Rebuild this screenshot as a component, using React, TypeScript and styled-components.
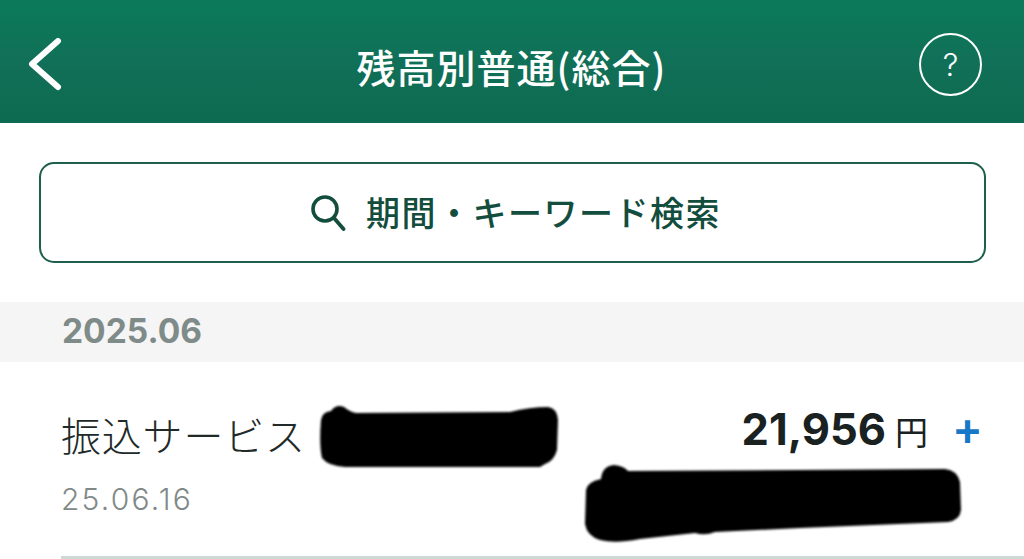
import React from "react";
import styled, { createGlobalStyle } from "styled-components";

const Global = createGlobalStyle`
  html, body { margin: 0; padding: 0; background: #fff; }
  body { font-family: Inter, "Noto Sans CJK JP", sans-serif; }
  * { box-sizing: border-box; }
`;

const Page = styled.div`
  position: relative;
  width: 1024px;
  height: 559px;
  overflow: hidden;
  background: #fff;
`;

const Header = styled.header`
  height: 123px;
  padding: 8px 41px 0 28px;
  background: linear-gradient(180deg, #0b7a5a 0%, #116f57 55%, #0c6b50 100%);
  display: grid;
  grid-template-columns: 64px 1fr 64px;
  align-items: center;
  color: #fff;
`;

const Title = styled.h1`
  margin: 0;
  padding-left: 12px;
  text-align: center;
  font-family: "Noto Sans CJK JP", sans-serif;
  font-size: 39px;
  line-height: 44px;
  font-weight: 500;
  letter-spacing: 1px;
  white-space: nowrap;
`;

const BackIcon = styled.svg`
  display: block;
  width: 36px;
  height: 56px;
`;

const HelpButton = styled.div`
  width: 63px;
  height: 63px;
  border: 2.5px solid #fff;
  border-radius: 50%;
  margin-bottom: 2px;
  display: flex;
  align-items: center;
  justify-content: center;
  font-size: 31px;
  font-weight: 300;
  line-height: 1;
`;

const SearchArea = styled.div`
  padding: 39px 38px 39px 39px;
`;

const SearchButton = styled.div`
  height: 101px;
  padding-left: 6px;
  border: 2px solid #1d5f4c;
  border-radius: 15px;
  display: flex;
  align-items: center;
  justify-content: center;
  gap: 20px;
  color: #134d3d;
`;

const SearchIcon = styled.svg`
  width: 36px;
  height: 38px;
  display: block;
`;

const SearchLabel = styled.span`
  font-family: "Noto Sans CJK JP", sans-serif;
  font-size: 34px;
  line-height: 44px;
  font-weight: 500;
  letter-spacing: 1.5px;
  margin-top: -2px;
`;

const MonthBand = styled.div`
  height: 60px;
  padding: 0 0 2px 62px;
  background: #f5f5f5;
  display: flex;
  align-items: center;
  font-size: 33.5px;
  font-weight: 700;
  color: #7e8b89;
`;

const Row = styled.div`
  height: 197px;
  margin-left: 61px;
  padding-top: 44px;
  border-bottom: 3px solid #ccd9d5;
  display: flex;
  justify-content: space-between;
  align-items: flex-start;
`;

const Left = styled.div`
  display: flex;
  flex-direction: column;
  gap: 19px;
`;

const Name = styled.div`
  font-family: "Noto Sans CJK JP", sans-serif;
  font-size: 40px;
  line-height: 56px;
  font-weight: 300;
  letter-spacing: 0.8px;
  color: #222a29;
`;

const DateText = styled.div`
  font-size: 30px;
  line-height: 36px;
  font-weight: 300;
  letter-spacing: 2.2px;
  color: #7f8a88;
`;

const AmountLine = styled.div`
  display: flex;
  align-items: baseline;
  padding-right: 41px;
  margin-top: -5px;
  color: #1a2221;
`;

const Amount = styled.span`
  font-size: 43.5px;
  line-height: 56px;
  font-weight: 700;
`;

const Yen = styled.span`
  margin-left: 9px;
  font-family: "Noto Sans CJK JP", sans-serif;
  font-size: 33px;
  font-weight: 400;
`;

const Plus = styled.span`
  margin-left: 24px;
  font-size: 46px;
  line-height: 44px;
  font-weight: 600;
  color: #1878c8;
`;

const Redaction = styled.svg`
  position: absolute;
  left: 0;
  top: 0;
  width: 1024px;
  height: 559px;
  pointer-events: none;
  filter: blur(1px);
`;

export default function App() {
  return (
    <Page>
      <Global />
      <Header>
        <BackIcon viewBox="0 0 36 56">
          <path d="M30 3 L4 26 L30 49" fill="none" stroke="#fff" strokeWidth="6" strokeLinecap="round" strokeLinejoin="round" />
        </BackIcon>
        <Title>残高別普通(総合)</Title>
        <HelpButton>?</HelpButton>
      </Header>
      <SearchArea>
        <SearchButton>
          <SearchIcon viewBox="0 0 36 38">
            <circle cx="15" cy="15" r="12" fill="none" stroke="currentColor" strokeWidth="3.6" />
            <path d="M24 24 L33.5 35" fill="none" stroke="currentColor" strokeWidth="3.8" strokeLinecap="round" />
          </SearchIcon>
          <SearchLabel>期間・キーワード検索</SearchLabel>
        </SearchButton>
      </SearchArea>
      <MonthBand>2025.06</MonthBand>
      <Row>
        <Left>
          <Name>振込サービス</Name>
          <DateText>25.06.16</DateText>
        </Left>
        <AmountLine>
          <Amount>21,956</Amount>
          <Yen>円</Yen>
          <Plus>+</Plus>
        </AmountLine>
      </Row>
      <Redaction viewBox="0 0 1024 559">
        <path
          d="M321 420 Q322 412 331 411 Q336 404 344 407 Q350 412 356 413 L510 412 Q530 407 548 407 Q557 408 558 420 L557 450 Q554 461 545 464 L540 467 L345 467 Q328 466 322 458 Q319 445 321 420 Z"
          fill="#000"
        />
        <path
          d="M586 490 Q587 482 601 479 Q602 466 614 465 Q624 466 628 471 L800 470 L945 469 Q957 470 960 482 L961 510 Q960 520 948 522 L800 528 L715 532 Q705 536 695 533 L640 539 Q615 544 600 540 Q587 536 585 524 Z"
          fill="#000"
        />
      </Redaction>
    </Page>
  );
}
